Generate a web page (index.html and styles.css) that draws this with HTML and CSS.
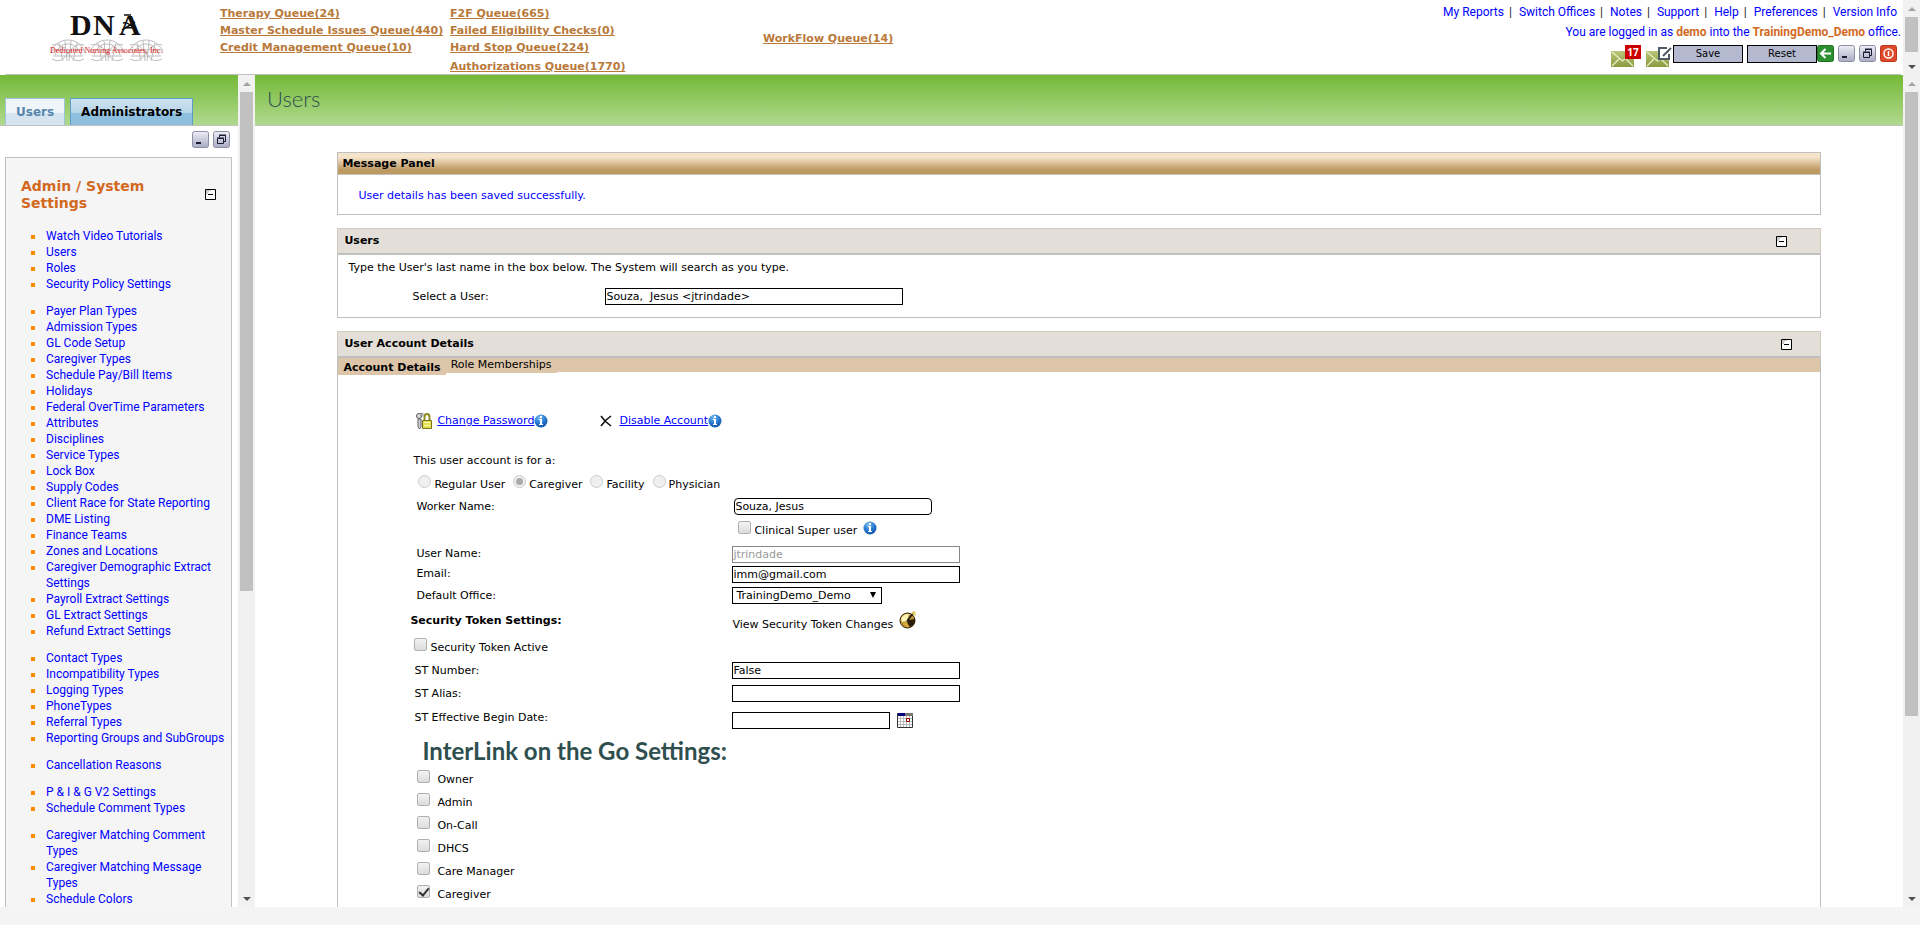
FILE: index.html
```html
<!DOCTYPE html>
<html lang="en">
<head>
<meta charset="utf-8">
<title>Users</title>
<link rel="stylesheet" href="styles.css">
</head>
<body>
<svg class="defs" width="0" height="0" aria-hidden="true">
  <defs>
    <linearGradient id="gOlive" x1="0" y1="0" x2="0" y2="1"><stop offset="0" stop-color="#b9c879"/><stop offset="1" stop-color="#8a9a3f"/></linearGradient>
    <linearGradient id="gSilver" x1="0" y1="0" x2="0" y2="1"><stop offset="0" stop-color="#eeeef6"/><stop offset="1" stop-color="#a9a9c4"/></linearGradient>
    <radialGradient id="gBlue" cx=".4" cy=".25" r=".8"><stop offset="0" stop-color="#7fc0f5"/><stop offset=".5" stop-color="#2b7fd4"/><stop offset="1" stop-color="#0d4fa3"/></radialGradient>
    <symbol id="minus" viewBox="0 0 11 11"><path fill="#fff" stroke="#000" d="M.5.5h10v10H.5z"/><path fill="#ccc" d="M1 1h5v1H4v1H3v2H1z"/><path stroke="#000" d="M3 5.500h5"/></symbol>
    <symbol id="min" viewBox="0 0 17 17"><rect x=".5" y=".5" width="16" height="16" rx="2" fill="url(#gSilver)" stroke="#8d8da6"/><path stroke="#1b1b33" stroke-width="2" d="M4 12h5"/></symbol>
    <symbol id="restore" viewBox="0 0 17 17"><rect x=".5" y=".5" width="16" height="16" rx="2" fill="url(#gSilver)" stroke="#8d8da6"/><path fill="none" stroke="#1b1b33" d="M6.500 6.500v-2h6v6h-2M4.500 7.500h6v5h-6zM4 7h7M6 4h7"/></symbol>
    <symbol id="info" viewBox="0 0 14 14"><circle cx="7" cy="7" r="6.500" fill="url(#gBlue)"/><path fill="#fff" d="M6 2h2v2H6zM5 5h3v5h1v1H5v-1h1V6H5z"/></symbol>
    <symbol id="mail" viewBox="0 0 23 16"><path fill="url(#gOlive)" d="M0 0h23v16H0z"/><path fill="none" stroke="#e9efc6" stroke-width="1.200" d="M1 1l10.500 9L22 1M1 15l7-7M22 15l-7-7"/></symbol>
    <symbol id="coil" viewBox="0 0 36 24"><g fill="none" stroke="#bdbdbd"><path d="M1 14C3 6 10 1 18 1s15 5 17 13M5 16C7 9 12 5 18 5s11 4 13 11M2 20c8 4 12 0 16-6S28 4 34 6M34 20c-8 4-12 0-16-6S8 4 2 6"/><path d="M9 4l4 18M15 2l2 20M21 2l-2 20M27 4l-4 18M1 11h34M3 17h30"/></g></symbol>
  </defs>
</svg>

<header class="top">
  <div class="top-main">
    <svg class="logo" width="125" height="60" viewBox="0 0 125 60" role="img" aria-label="DNA Dedicated Nursing Associates, Inc.">
      <use href="#coil" x="8" y="32" width="36" height="24"/>
      <use href="#coil" x="47" y="32" width="36" height="24"/>
      <use href="#coil" x="86" y="32" width="36" height="24"/>
      <g class="logo-name"><text x="28" y="28">D</text><text x="51" y="28">N</text><text x="77" y="28">A</text></g>
      <path fill="none" stroke="#111" stroke-width="1.500" d="M82 8h7M81 16c4-1 8 2 11 6M93 15L80 23"/>
      <text class="logo-sub" x="8" y="46">Dedicated Nursing Associates, Inc.</text>
    </svg>
    <nav class="queues" aria-label="Queues">
      <div class="q-col q-a"><a href="#">Therapy Queue(24)</a><a href="#">Master Schedule Issues Queue(440)</a><a href="#">Credit Management Queue(10)</a></div>
      <div class="q-col q-b"><a href="#">F2F Queue(665)</a><a href="#">Failed Eligibility Checks(0)</a><a href="#">Hard Stop Queue(224)</a><a href="#" class="q-last">Authorizations Queue(1770)</a></div>
      <div class="q-col q-c"><a href="#">WorkFlow Queue(14)</a></div>
    </nav>
    <div class="account">
      <nav class="util" aria-label="Utility"><a href="#">My Reports</a><a href="#">Switch Offices</a><a href="#">Notes</a><a href="#">Support</a><a href="#">Help</a><a href="#">Preferences</a><a href="#">Version Info</a></nav>
      <p class="login">You are logged in as <b>demo</b> into the <b>TrainingDemo_Demo</b> office.</p>
      <div class="tools">
        <a href="#" class="mail" aria-label="Inbox"><svg width="23" height="16"><use href="#mail"/></svg><span class="badge">17</span></a>
        <a href="#" class="mail" aria-label="Compose"><svg width="23" height="16"><use href="#mail"/></svg>
          <svg class="pen" width="14" height="13" viewBox="0 0 14 13"><path fill="#fff" stroke="#4d5a68" stroke-width="2" d="M9 1H1v11h10V7"/><path stroke="#4d5a68" stroke-width="2" d="M5 9l8-8"/></svg></a>
        <button type="button" class="btn">Save</button><button type="button" class="btn btn-reset">Reset</button>
        <button type="button" class="ico" aria-label="Back"><svg width="17" height="17"><rect x=".5" y=".5" width="16" height="16" rx="2" fill="#2c8f30" stroke="#1c701f"/><path fill="none" stroke="#fff" stroke-width="2" d="M14 8.500H4M8.500 4L4 8.500 8.500 13"/></svg></button>
        <button type="button" class="ico ico-gap" aria-label="Minimize"><svg width="17" height="17"><use href="#min"/></svg></button>
        <button type="button" class="ico ico-gap" aria-label="Restore"><svg width="17" height="17"><use href="#restore"/></svg></button>
        <button type="button" class="ico ico-gap" aria-label="Log out"><svg width="17" height="17"><rect x=".5" y=".5" width="16" height="16" rx="2" fill="#e04a2a" stroke="#b8371c"/><circle cx="8.500" cy="8.500" r="4.500" fill="none" stroke="#fff" stroke-width="1.500"/><path stroke="#fff" stroke-width="1.500" d="M8.500 6v5"/></svg></button>
      </div>
    </div>
  </div>
  <div class="bar" aria-hidden="true"><i class="up"></i><i class="thumb thumb-top"></i><i class="down"></i></div>
</header>

<div class="frames">
  <aside class="side">
    <div class="side-main">
      <div class="band side-band"><a href="#" class="tab">Users</a><a href="#" class="tab tab-on">Administrators</a></div>
      <div class="side-tools">
        <button type="button" class="ico" aria-label="Minimize menu"><svg width="17" height="17"><use href="#min"/></svg></button>
        <button type="button" class="ico" aria-label="Restore menu"><svg width="17" height="17"><use href="#restore"/></svg></button>
      </div>
      <nav class="menu" aria-label="Admin">
        <div class="menu-head"><h2>Admin / System Settings</h2><button type="button" class="ico" aria-label="Collapse"><svg width="11" height="11"><use href="#minus"/></svg></button></div>
        <ul><li><a href="#">Watch Video Tutorials</a></li><li><a href="#">Users</a></li><li><a href="#">Roles</a></li><li><a href="#">Security Policy Settings</a></li></ul>
        <ul><li><a href="#">Payer Plan Types</a></li><li><a href="#">Admission Types</a></li><li><a href="#">GL Code Setup</a></li><li><a href="#">Caregiver Types</a></li><li><a href="#">Schedule Pay/Bill Items</a></li><li><a href="#">Holidays</a></li><li><a href="#">Federal OverTime Parameters</a></li><li><a href="#">Attributes</a></li><li><a href="#">Disciplines</a></li><li><a href="#">Service Types</a></li><li><a href="#">Lock Box</a></li><li><a href="#">Supply Codes</a></li><li><a href="#">Client Race for State Reporting</a></li><li><a href="#">DME Listing</a></li><li><a href="#">Finance Teams</a></li><li><a href="#">Zones and Locations</a></li><li><a href="#">Caregiver Demographic Extract Settings</a></li><li><a href="#">Payroll Extract Settings</a></li><li><a href="#">GL Extract Settings</a></li><li><a href="#">Refund Extract Settings</a></li></ul>
        <ul><li><a href="#">Contact Types</a></li><li><a href="#">Incompatibility Types</a></li><li><a href="#">Logging Types</a></li><li><a href="#">PhoneTypes</a></li><li><a href="#">Referral Types</a></li><li><a href="#">Reporting Groups and SubGroups</a></li></ul>
        <ul><li><a href="#">Cancellation Reasons</a></li></ul>
        <ul><li><a href="#">P &amp; I &amp; G V2 Settings</a></li><li><a href="#">Schedule Comment Types</a></li></ul>
        <ul><li><a href="#">Caregiver Matching Comment Types</a></li><li><a href="#">Caregiver Matching Message Types</a></li><li><a href="#">Schedule Colors</a></li></ul>
      </nav>
    </div>
    <div class="bar" aria-hidden="true"><i class="up"></i><i class="thumb thumb-side"></i><i class="down"></i></div>
  </aside>

  <main class="main">
    <div class="content">
      <div class="band"><h1>Users</h1></div>
      <section class="panel">
        <h2 class="panel-gold">Message Panel</h2>
        <p class="message">User details has been saved successfully.</p>
      </section>
      <section class="panel">
        <div class="panel-head"><h2>Users</h2><button type="button" class="ico" aria-label="Collapse"><svg width="11" height="11"><use href="#minus"/></svg></button></div>
        <div class="search">
          <p>Type the User's last name in the box below. The System will search as you type.</p>
          <div class="search-row"><label for="pick">Select a User:</label><input type="text" id="pick" class="box box-pick" value="Souza,&nbsp; Jesus &lt;jtrindade&gt;"></div>
        </div>
      </section>
      <section class="panel">
        <div class="panel-head panel-head-near"><h2>User Account Details</h2><button type="button" class="ico" aria-label="Collapse"><svg width="11" height="11"><use href="#minus"/></svg></button></div>
        <div class="subtabs"><a href="#" class="subtab-on">Account Details</a><a href="#">Role Memberships</a></div>
        <form class="form">
          <div class="actions">
            <svg width="18" height="18" viewBox="0 0 18 18"><circle cx="4" cy="4" r="2.500" fill="#ddd" stroke="#555"/><path fill="#ccc" stroke="#666" d="M3 7h3v8l-1.500 2L3 15z"/><path fill="none" stroke="#888" d="M4 1.500h4v3M6 9h2M6 12h1"/><path fill="none" stroke="#8d8a1c" stroke-width="2" d="M9.500 9V5a2.500 3 0 0 1 5 0v4"/><path fill="#e3e04e" stroke="#77741a" d="M7.500 8.500h9v8h-9z"/><path stroke="#f9f8b0" d="M9 10.500h6M9 13.500h6"/></svg>
            <a href="#">Change Password</a><svg width="14" height="14"><use href="#info"/></svg>
            <svg class="cross" width="12" height="12" viewBox="0 0 12 12"><path fill="none" stroke="#111" stroke-width="1.600" d="M1 1l4 5 6 5M11 1L6 5l-5 6"/></svg>
            <a href="#">Disable Account</a><svg width="14" height="14"><use href="#info"/></svg>
          </div>
          <fieldset class="kinds">
            <legend>This user account is for a:</legend>
            <label><input type="radio" name="kind" disabled>Regular User</label>
            <label><input type="radio" name="kind" disabled checked>Caregiver</label>
            <label><input type="radio" name="kind" disabled>Facility</label>
            <label><input type="radio" name="kind" disabled>Physician</label>
          </fieldset>
          <div class="row"><label class="in-l" for="worker">Worker Name:</label><input type="text" id="worker" class="box box-worker" value="Souza, Jesus"></div>
          <div class="row row-super"><span></span><span class="super"><label class="check"><input type="checkbox">Clinical Super user</label><svg width="14" height="14"><use href="#info"/></svg></span></div>
          <div class="row row-20"><label class="in-l" for="uname">User Name:</label><input type="text" id="uname" class="box" value="jtrindade" disabled></div>
          <div class="row row-20"><label class="in-l" for="email">Email:</label><input type="text" id="email" class="box" value="imm@gmail.com"></div>
          <div class="row"><label class="in-l" for="office">Default Office:</label><span class="pick"><select id="office"><option>TrainingDemo_Demo</option></select></span></div>
          <div class="row row-token"><h3>Security Token Settings:</h3><span class="view">View Security Token Changes
            <svg width="18" height="18" viewBox="0 0 18 18"><circle cx="8.500" cy="9.500" r="7.500" fill="#b8952f" stroke="#332408"/><path fill="#fff3b8" d="M2 8a7 7 0 0 1 8-5l-2 7-5 1z"/><path fill="#2b1d06" d="M9 9l7-1a7 7 0 0 1-5 8L8 12z"/><path fill="#d9a93c" d="M4 12l4-1 2 5a7 7 0 0 1-6-4z"/><path stroke="#111" stroke-width="1.400" d="M8 10l7-9"/><path fill="#e9cf5d" d="M12 2l4-2 1 5z"/></svg></span></div>
          <div class="row row-active"><label class="check in-s"><input type="checkbox">Security Token Active</label></div>
          <div class="row"><label class="in-s" for="stn">ST Number:</label><input type="text" id="stn" class="box" value="False"></div>
          <div class="row"><label class="in-s" for="sta">ST Alias:</label><input type="text" id="sta" class="box"></div>
          <div class="row row-date"><label class="in-s" for="std">ST Effective Begin Date:</label><span class="date"><input type="text" id="std" class="box box-date">
            <button type="button" class="ico" aria-label="Open calendar"><svg width="16" height="15"><path fill="#fff" stroke="#333" d="M.5.5h15v14H.5z"/><path stroke="#bbb" d="M3.500 3v11M6.500 3v11M9.500 3v11M12.500 3v11M1 5.500h14M1 8.500h14M1 11.500h14"/><path fill="#00007f" d="M1 0h7v3H1z"/><path fill="#777" d="M8 0h8v3H8z"/><path fill="#fff" stroke="#900" d="M9.500 5.500h3v3h-3z"/></svg></button></span></div>
          <h3 class="go">InterLink on the Go Settings:</h3>
          <div class="roles">
            <label class="check"><input type="checkbox">Owner</label>
            <label class="check"><input type="checkbox">Admin</label>
            <label class="check"><input type="checkbox">On-Call</label>
            <label class="check"><input type="checkbox">DHCS</label>
            <label class="check"><input type="checkbox">Care Manager</label>
            <label class="check"><input type="checkbox" checked>Caregiver</label>
          </div>
        </form>
      </section>
    </div>
    <div class="bar" aria-hidden="true"><i class="up"></i><i class="thumb thumb-main"></i><i class="down"></i></div>
  </main>
</div>
</body>
</html>
```

FILE: styles.css
```css
* { box-sizing: border-box; }
html { height: 100%; }
body {
  margin: 0;
  height: 100vh;
  padding-bottom: 18px;
  display: flex;
  flex-direction: column;
  overflow: hidden;
  background: #f4f4f4;
  color: #000;
  font: 11px/14px "DejaVu Sans", sans-serif;
}
h1, h2, h3, p, ul, fieldset { margin: 0; padding: 0; border: 0; }
h2, h3 { font-size: 11px; }
svg { display: block; flex: none; }
.defs { position: absolute; }
a { color: #00f; }
button { font: inherit; }
.ico { display: block; flex: none; padding: 0; border: 0; background: none; }

/* scroll bars */
.bar { flex: none; width: 17px; background: #f1f1f1; display: flex; flex-direction: column; align-items: center; }
.up, .down { width: 17px; height: 17px; flex: none; display: grid; place-items: center; }
.up::before, .down::before { content: ""; border: 4px solid transparent; }
.up::before { border-top: 0; border-bottom-color: #a3a3a3; }
.down::before { border-bottom: 0; border-top-color: #505050; }
.down { margin-top: auto; }
.thumb { width: 13px; background: #c1c1c1; }
.thumb-top { height: 35px; }
.thumb-side { height: 60%; }
.thumb-main { height: 75%; }

/* header */
.top { display: flex; flex: none; height: 75px; background: #fff; }
.top-main { flex: 1; margin: 0 2px 0 5px; border-bottom: 1px solid silver; display: flex; align-items: flex-start; }
.logo { margin: 7px 53px 0 37px; }
.logo-name { font: bold 30px "Liberation Serif", serif; fill: #111; }
.logo-sub { font: 8px "Liberation Serif", serif; fill: #e02020; }
.queues { display: flex; font-weight: bold; }
.queues a { color: #b8793a; }
.q-col { display: flex; flex-direction: column; align-items: flex-start; line-height: 17px; white-space: nowrap; padding-top: 5px; }
.q-a { width: 230px; }
.q-b { width: 313px; }
.q-last { padding-top: 2px; }
.q-c { padding-top: 30px; }
.account { margin-left: auto; display: flex; flex-direction: column; align-items: flex-end; font: 12px/20px Roboto, sans-serif; color: #00f; white-space: nowrap; padding-top: 2px; }
.util { padding-right: 4px; }
.util a { text-decoration: none; }
.util a + a::before { content: "|"; color: #222; margin: 0 7px 0 5px; }
.login b { color: #d2691e; font-weight: bold; }
.tools { display: flex; align-items: flex-start; padding: 3px 4px 0 0; }
.mail { position: relative; margin: 6px 12px 0 0; }
.mail + .mail { margin-right: 4px; }
.badge { position: absolute; left: 14px; top: -6px; width: 16px; height: 14px; background: #c00; color: #fff; font: bold 10px/14px "Noto Sans", sans-serif; text-align: center; }
.pen { position: absolute; left: 12px; top: -4px; }
.btn { width: 70px; height: 18px; padding: 0; border: 1px solid #000; border-radius: 0; background: #b4b9d0; color: #000; font: 10px/14px "DejaVu Sans", sans-serif; }
.btn-reset { margin-left: 4px; }
.ico-gap { margin-left: 4px; }

/* frames */
.frames { flex: 1; min-height: 0; display: flex; background: #fff; }
.band { height: 51px; flex: none; background: linear-gradient(#73b936, #b1d98f); border-bottom: 1px solid silver; }
.side { flex: none; width: 255px; display: flex; }
.side-main { flex: 1; overflow: hidden; }
.side-band { display: flex; align-items: flex-end; gap: 5px; padding-left: 5px; }
.tab { height: 27px; padding: 0 10px; border: 1px solid #9cc3dc; border-bottom: 0; background: linear-gradient(#f0f5f9 55%, #d5e4ee 55%); color: #5585ad; font: bold 12px/26px "DejaVu Sans", sans-serif; text-decoration: none; }
.tab-on { background: linear-gradient(#cfe3f1, #b5d4e8 55%, #8fbfdf 55%); border-color: #5b9dc8; color: #000; }
.side-tools { display: flex; justify-content: flex-end; gap: 4px; padding: 5px 8px 9px; }
.menu { margin: 0 6px 0 5px; padding: 20px 0 0 15px; border: 1px solid silver; background: #f5f5f5; font: 12px/16px Roboto, sans-serif; }
.menu-head { display: flex; justify-content: space-between; align-items: center; padding-right: 15px; margin-bottom: 16px; }
.menu-head .ico { margin-bottom: 2px; }
.menu h2 { width: 150px; color: #d2691e; font: bold 14px/17px "DejaVu Sans", sans-serif; }
.menu ul { list-style: none; margin-bottom: 11px; }
.menu li { padding-left: 25px; position: relative; }
.menu li::before { content: ""; position: absolute; left: 10px; top: 7px; width: 4px; height: 4px; background: #ff8c00; }
.menu a { text-decoration: none; }

/* content */
.main { flex: 1; display: flex; min-width: 0; }
.content { flex: 1; overflow: hidden; }
h1 { padding: 10px 0 0 12px; font: 300 22px/28px Lato, sans-serif; color: #2f4f4f; }
.panel { width: 90%; margin: 0 auto 13px; border: 1px solid silver; }
.band + .panel { margin-top: 26px; }
.panel-gold { height: 22px; padding-left: 4px; line-height: 22px; border-bottom: 1px solid silver; background: linear-gradient(#f5e4ca 20%, #be9962 80%); }
.message { padding: 14px 20px 11px; color: #00f; }
.panel-head { height: 27px; margin: -1px -1px 0; padding: 0 33px 0 6px; display: flex; align-items: center; justify-content: space-between; background: #e3ded7; border: 1px solid #d0cdc0; border-bottom: 2px solid silver; }
.panel-head-near { padding-right: 28px; }
.search { padding: 6px 10px 12px; }
.search-row { display: flex; align-items: center; padding: 13px 0 0 64px; }
.search-row label { width: 193px; }
.box { width: 228px; height: 17px; padding: 0; border: 1px solid #000; border-radius: 0; background: #fff; color: #000; font: inherit; }
.box:disabled { border-color: #888; color: #999; }
.box-pick { width: 298px; }
.box-worker { width: 198px; border-radius: 4px; margin-left: 2px; }
.box-date { width: 158px; }
.subtabs { height: 14px; display: flex; align-items: flex-start; background: #dcc5a9; }
.subtabs a { color: #000; text-decoration: none; background: #dcc5a9; height: 15px; padding: 0 5px; }
.subtabs .subtab-on { height: 17px; font-weight: bold; line-height: 19px; }

.form { padding: 38px 0 40px 72px; }
.form label, .form h3, .form span { white-space: nowrap; }
.actions { display: flex; align-items: center; height: 22px; padding-left: 5px; }
.actions a { margin-left: 4px; }
.cross { margin: 0 3px 0 52px; }
.kinds { display: flex; align-items: flex-start; gap: 8px; padding: 7px 0 0 8px; }
.kinds legend { padding: 22px 0 0 3px; margin-left: -8px; }
.kinds label { display: flex; align-items: flex-start; line-height: 20px; }
.kinds input { margin: 0 3px 0 0; }
input[type=radio], input[type=checkbox] { appearance: none; flex: none; width: 13px; height: 13px; border: 1px solid #b0b0b0; background: linear-gradient(#f2f2f2, #dcdcdc); }
input[type=radio] { border-radius: 50%; border-color: #ccc; display: grid; place-items: center; background: #f0f0f0; }
input[type=radio]:checked::before { content: ""; width: 7px; height: 7px; border-radius: 50%; background: #aaa; }
input[type=checkbox] { border-radius: 2px; margin: 0; display: grid; place-items: center; }
input[type=checkbox]:checked::before { content: ""; width: 4px; height: 8px; margin-bottom: 2px; border: solid #333; border-width: 0 2px 2px 0; transform: rotate(40deg); }
.row { display: grid; grid-template-columns: 322px 1fr; align-items: center; height: 23px; }
.row-20 { height: 20px; }
.in-l { padding-left: 6px; }
.in-s { padding-left: 4px; }
.check { display: flex; align-items: flex-start; line-height: 20px; gap: 3px; }
.row-super { height: 26px; }
.super { display: flex; gap: 6px; padding-left: 6px; }
.pick { position: relative; width: 150px; }
.pick::after { content: ""; position: absolute; right: 6px; top: 5px; border: 3px solid transparent; border-top: 6px solid #000; border-bottom: 0; }
select { appearance: none; display: block; width: 100%; height: 17px; padding: 0 3px; border: 1px solid #000; border-radius: 0; background: #fff; color: #000; font: inherit; }
.row-token { height: 29px; }
.view { display: flex; align-items: flex-end; gap: 6px; }
.row-token h3 { padding-bottom: 2px; }
.view svg { margin-bottom: 3px; }
.row-date { height: 30px; }
.row-date label { padding-bottom: 4px; }
.date { display: flex; gap: 7px; align-items: center; }
.go { padding-left: 12px; font: bold 24px/32px Lato, sans-serif; color: #2f4f4f; }
.roles { display: flex; flex-direction: column; gap: 3px; padding: 3px 0 0 7px; }
.roles .check { gap: 7px; }
```
